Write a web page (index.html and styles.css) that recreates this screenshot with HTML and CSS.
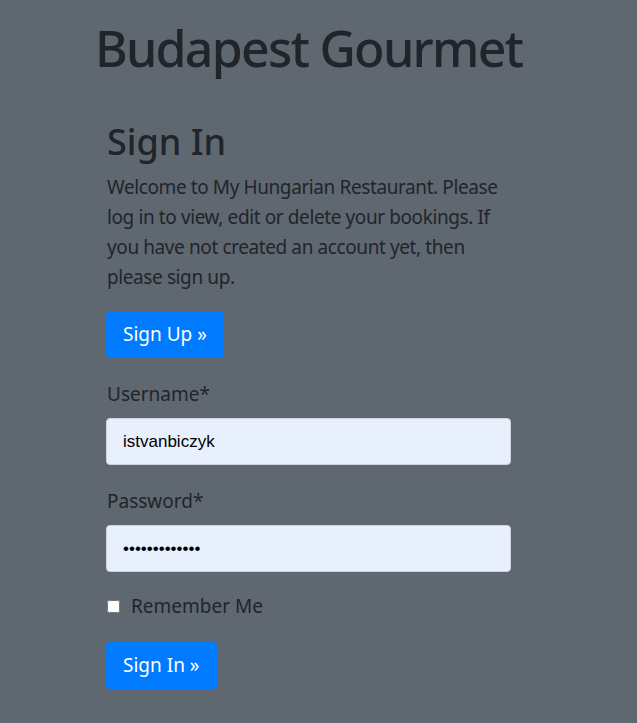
FILE: index.html
```html
<!DOCTYPE html>
<html>
<head>
<meta charset="utf-8">
<link rel="stylesheet" href="styles.css">
</head>
<body>
<div class="page">
  <header class="masthead">
    <h1 class="brand">Budapest Gourmet</h1>
  </header>
  <main class="content">
    <h2 class="title">Sign In</h2>
    <p class="lead">Welcome to My Hungarian Restaurant. Please log in to view, edit or delete your bookings. If you have not created an account yet, then please sign up.</p>
    <a class="btn" href="#">Sign Up »</a>
    <form class="form">
      <label class="label" for="u">Username*</label>
      <input class="field" id="u" type="text" value="istvanbiczyk">
      <label class="label" for="p">Password*</label>
      <input class="field" id="p" type="password" value="istvanbiczyk1">
      <label class="check"><input type="checkbox" class="box"><span>Remember Me</span></label>
      <button class="btn" type="button">Sign In »</button>
    </form>
  </main>
</div>
</body>
</html>
```
FILE: styles.css
```css
html, body {
  margin: 0;
  padding: 0;
  background: #5f6771;
}
body {
  font-family: "Noto Sans", "Open Sans", sans-serif;
  color: #212529;
  height: 723px;
  overflow: hidden;
}
.page {
  width: 617px;
}
.masthead {
  text-align: center;
  padding-top: 18px;
}
.brand {
  margin: 0;
  font-size: 50px;
  font-weight: 500;
  line-height: 1.22;
  letter-spacing: -1.7px;
}
.content {
  margin-left: 106px;
  width: 405px;
  padding-top: 41px;
}
.title {
  margin: 0 0 9px 1px;
  font-size: 36px;
  font-weight: 500;
  line-height: 1.2;
}
.lead {
  margin: 0 0 19px 1px;
  font-size: 19px;
  font-weight: 400;
  line-height: 30px;
  letter-spacing: -0.4px;
}
.btn {
  display: inline-block;
  box-sizing: border-box;
  height: 47px;
  padding: 0 16px;
  background: #007bff;
  color: #fff;
  border: 1px solid #007bff;
  border-radius: 4px;
  font-family: inherit;
  font-size: 19px;
  line-height: 45px;
  text-decoration: none;
}
.form {
  display: flex;
  flex-direction: column;
  align-items: flex-start;
  margin-top: 22px;
}
.label {
  margin-left: 1px;
  font-size: 19px;
  line-height: 28px;
  margin-bottom: 10px;
}
.field {
  box-sizing: border-box;
  width: 405px;
  height: 47px;
  margin: 0 0 22px 0;
  padding: 0 16px;
  background: #e8f0fe;
  border: 1px solid #ced4da;
  border-radius: 4px;
  font-family: "Liberation Sans", Arial, sans-serif;
  font-size: 17px;
  color: #000;
}
.check {
  display: flex;
  align-items: center;
  font-size: 19px;
  line-height: 28px;
  margin-bottom: 22px;
  margin-top: -2px;
}
.box {
  margin: 0 11px 0 1px;
  width: 13px;
  height: 13px;
}
```
